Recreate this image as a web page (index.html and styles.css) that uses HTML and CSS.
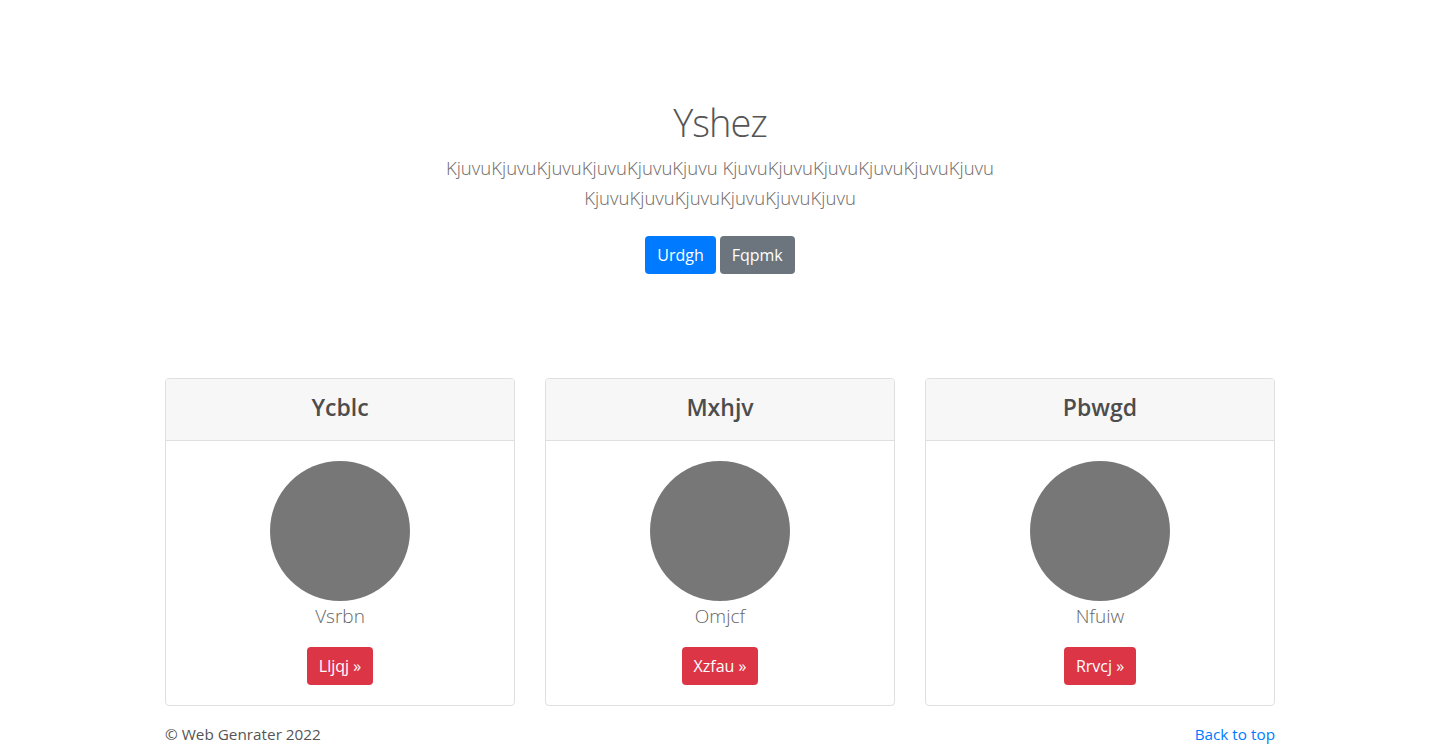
FILE: index.html
```html
<!DOCTYPE html>
<html lang="en">
<head>
<meta charset="utf-8">
<title>Yshez</title>
<link rel="stylesheet" href="styles.css">
</head>
<body>
<main class="container">
  <section class="hero">
    <h1 class="hero-title">Yshez</h1>
    <p class="hero-lead">KjuvuKjuvuKjuvuKjuvuKjuvuKjuvu KjuvuKjuvuKjuvuKjuvuKjuvuKjuvu KjuvuKjuvuKjuvuKjuvuKjuvuKjuvu</p>
    <div class="hero-actions">
      <a href="#" class="btn btn-primary">Urdgh</a>
      <a href="#" class="btn btn-secondary">Fqpmk</a>
    </div>
  </section>

  <section class="cards">
    <div class="card">
      <div class="card-header"><h4 class="card-title">Ycblc</h4></div>
      <div class="card-body">
        <div class="avatar"></div>
        <p class="card-text">Vsrbn</p>
        <a href="#" class="btn btn-danger">Lljqj »</a>
      </div>
    </div>
    <div class="card">
      <div class="card-header"><h4 class="card-title">Mxhjv</h4></div>
      <div class="card-body">
        <div class="avatar"></div>
        <p class="card-text">Omjcf</p>
        <a href="#" class="btn btn-danger">Xzfau »</a>
      </div>
    </div>
    <div class="card">
      <div class="card-header"><h4 class="card-title">Pbwgd</h4></div>
      <div class="card-body">
        <div class="avatar"></div>
        <p class="card-text">Nfuiw</p>
        <a href="#" class="btn btn-danger">Rrvcj »</a>
      </div>
    </div>
  </section>

  <footer class="footer">
    <span class="copy">© Web Genrater 2022</span>
    <a href="#" class="back-top">Back to top</a>
  </footer>
</main>
</body>
</html>
```

FILE: styles.css
```css
* { box-sizing: border-box; }
html, body { margin: 0; padding: 0; }
body {
  font-family: "Open Sans", "Noto Sans", "Liberation Sans", sans-serif;
  font-size: 16px;
  line-height: 1.5;
  color: #555;
  background: #fff;
}
a { text-decoration: none; }

.container {
  width: 1140px;
  margin: 0 auto;
  padding: 0 15px;
}

.hero {
  padding-top: 98px;
  text-align: center;
  display: flex;
  flex-direction: column;
  align-items: center;
}
.hero-title {
  margin: 0;
  font-size: 38px;
  font-weight: 300;
  letter-spacing: -1px;
  line-height: 48px;
  color: #555;
}
.hero-lead {
  margin: 7px 0 0;
  max-width: 600px;
  font-size: 18.5px;
  font-weight: 300;
  line-height: 30px;
  color: #6f6a68;
}
.hero-actions {
  margin-top: 23px;
  display: flex;
  gap: 4px;
  justify-content: center;
}

.btn {
  display: inline-block;
  padding: 6px 12px;
  font-size: 16px;
  line-height: 26px;
  border-radius: 4px;
  color: #fff;
  font-weight: 400;
}
.btn-primary { background: #007bff; }
.btn-secondary { background: #6c757d; }
.btn-danger { background: #dc3545; }

.cards {
  margin-top: 104px;
  display: grid;
  grid-template-columns: repeat(3, 350px);
  gap: 30px;
}
.card {
  border: 1px solid #dfdfdf;
  border-radius: 4px;
  text-align: center;
  overflow: hidden;
}
.card-header {
  background: #f7f7f7;
  border-bottom: 1px solid #dfdfdf;
  padding: 10px 20px 15px;
}
.card-title {
  margin: 0;
  font-size: 23px;
  font-weight: 600;
  line-height: 36px;
  color: #4d4d4d;
}
.card-body {
  padding: 20px;
  display: flex;
  flex-direction: column;
  align-items: center;
}
.avatar {
  width: 140px;
  height: 140px;
  border-radius: 50%;
  background: #777;
}
.card-text {
  margin: 0 0 16px;
  font-size: 19px;
  font-weight: 300;
  line-height: 30px;
  color: #666;
}

.footer {
  margin-top: 16px;
  display: flex;
  justify-content: space-between;
  font-size: 15.3px;
  line-height: 24px;
}
.copy { color: #555; }
.back-top { color: #007bff; }
```
